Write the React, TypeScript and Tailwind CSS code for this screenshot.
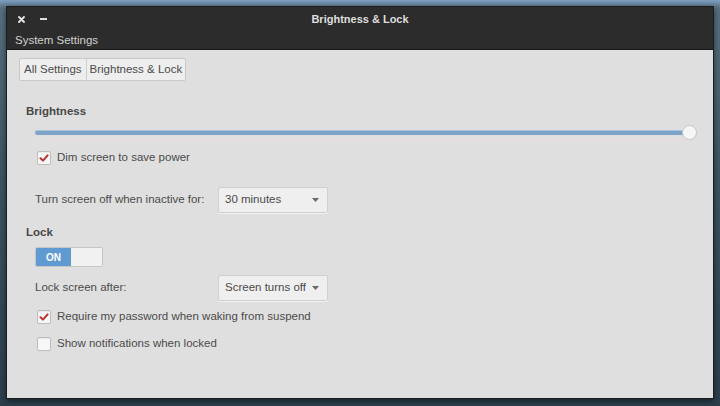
import type { ReactNode } from "react";

const font = { fontFamily: '"Liberation Sans", Arial, sans-serif' };

function CheckBox({ checked }: { checked?: boolean }) {
  return (
    <span className="flex h-[14px] w-[14px] items-center justify-center rounded-[2px] border border-[#bdbdbd] bg-[#f7f7f7] shadow-[inset_0_1px_1px_rgba(0,0,0,0.06)]">
      {checked && (
        <svg width="10" height="10" viewBox="0 0 10 10">
          <path d="M1.5 5.2 L4 7.6 L8.6 2.4" fill="none" stroke="#b8322e" strokeWidth="2" strokeLinecap="round" strokeLinejoin="round" />
        </svg>
      )}
    </span>
  );
}

function CheckRow({ checked, label, className }: { checked?: boolean; label: string; className?: string }) {
  return (
    <div className={`flex h-[16px] items-center gap-[6px] pl-[30px] ${className ?? ""}`}>
      <CheckBox checked={checked} />
      <span>{label}</span>
    </div>
  );
}

function Dropdown({ value }: { value: string }) {
  return (
    <div className="flex h-[26px] w-[110px] items-center justify-between rounded-[2px] border border-[#cfcfcf] bg-[#efefef] pl-[6px] pr-[8px] shadow-[0_1px_0_rgba(255,255,255,0.6)]">
      <span>{value}</span>
      <svg width="7" height="4" viewBox="0 0 7 4">
        <path d="M0 0 L7 0 L3.5 4 Z" fill="#6a6a6a" />
      </svg>
    </div>
  );
}

function Field({ label, children, className }: { label: string; children: ReactNode; className?: string }) {
  return (
    <div className={`flex h-[26px] items-center pl-[28px] ${className ?? ""}`}>
      <span className="w-[183px]">{label}</span>
      {children}
    </div>
  );
}

export default function App() {
  return (
    <div
      className="h-[406px] w-[720px] overflow-hidden bg-[linear-gradient(180deg,#7f9fc2_0px,#56707f_8px,#3c5561_45%,#2b3f4b_100%)] pl-[6px] pt-[6px]"
      style={font}
    >
      <div className="flex h-[393px] w-[708px] flex-col overflow-hidden border border-[#1c1c1c] shadow-[0_2px_6px_rgba(0,0,0,0.5)]">
        {/* title bar */}
        <header className="relative h-[43px] shrink-0 border-b border-[#1a1a1a] bg-[#2c2c2c] text-[#d6d6d6]">
          <div className="flex h-[22px] items-center gap-[15px] pl-[11px] pt-[2px]">
            <svg width="7" height="7" viewBox="0 0 7 7">
              <path d="M1 1 L6 6 M6 1 L1 6" stroke="#e6e6e6" strokeWidth="1.8" strokeLinecap="round" />
            </svg>
            <span className="h-[2px] w-[7px] bg-[#dcdcdc]" />
          </div>
          <div className="absolute left-0 right-0 top-[4px] text-center text-[11px] font-bold text-[#dedede]">
            Brightness &amp; Lock
          </div>
          <div className="pl-[8px] pt-[3px] text-[11.5px] text-[#d0d0d0]">System Settings</div>
        </header>

        {/* body */}
        <main className="flex flex-1 flex-col bg-[#dfdfdf] text-[11.5px] text-[#4b4b4b]">
          <nav className="ml-[12px] mt-[8px] flex h-[23px] w-max items-stretch rounded-[2px] border border-[#c9c9c9] bg-[#eeeeee]">
            <span className="flex items-center border-r border-[#cfcfcf] px-[4px]">All Settings</span>
            <span className="flex items-center px-[3px]">Brightness &amp; Lock</span>
          </nav>

          <h2 className="ml-[19px] mt-[23px] flex h-[16px] items-center text-[11.5px] font-bold text-[#484848]">Brightness</h2>

          <div className="relative ml-[28px] mt-[5px] h-[16px] w-[662px]">
            <div className="absolute left-0 right-[7px] top-[5px] h-[5px] rounded-full bg-[#7ea3c8] shadow-[inset_0_1px_0_#a9c4de]" />
            <div className="absolute left-0 right-[7px] top-[14px] h-px bg-[#e9dcdc]" />
            <div className="absolute right-0 top-[0px] h-[15px] w-[15px] rounded-full border border-[#c4c4c4] bg-[#f6f6f6]" />
          </div>

          <CheckRow checked label="Dim screen to save power" className="mt-[9px]" />

          <Field label="Turn screen off when inactive for:" className="mt-[21px]">
            <Dropdown value="30 minutes" />
          </Field>

          <h2 className="ml-[19px] mt-[12px] flex h-[16px] items-center text-[11.5px] font-bold text-[#484848]">Lock</h2>

          <div className="ml-[28px] mt-[6px] flex h-[20px] w-[68px] overflow-hidden rounded-[2px] border border-[#c6c6c6]">
            <span className="flex w-[35px] items-center justify-center bg-[#5f9bd2] text-[10px] font-bold text-white">ON</span>
            <span className="flex-1 bg-[#f1f1f1]" />
          </div>

          <Field label="Lock screen after:" className="mt-[8px]">
            <Dropdown value="Screen turns off" />
          </Field>

          <CheckRow checked label="Require my password when waking from suspend" className="mt-[8px]" />
          <CheckRow label="Show notifications when locked" className="mt-[11px]" />
        </main>
      </div>
    </div>
  );
}
